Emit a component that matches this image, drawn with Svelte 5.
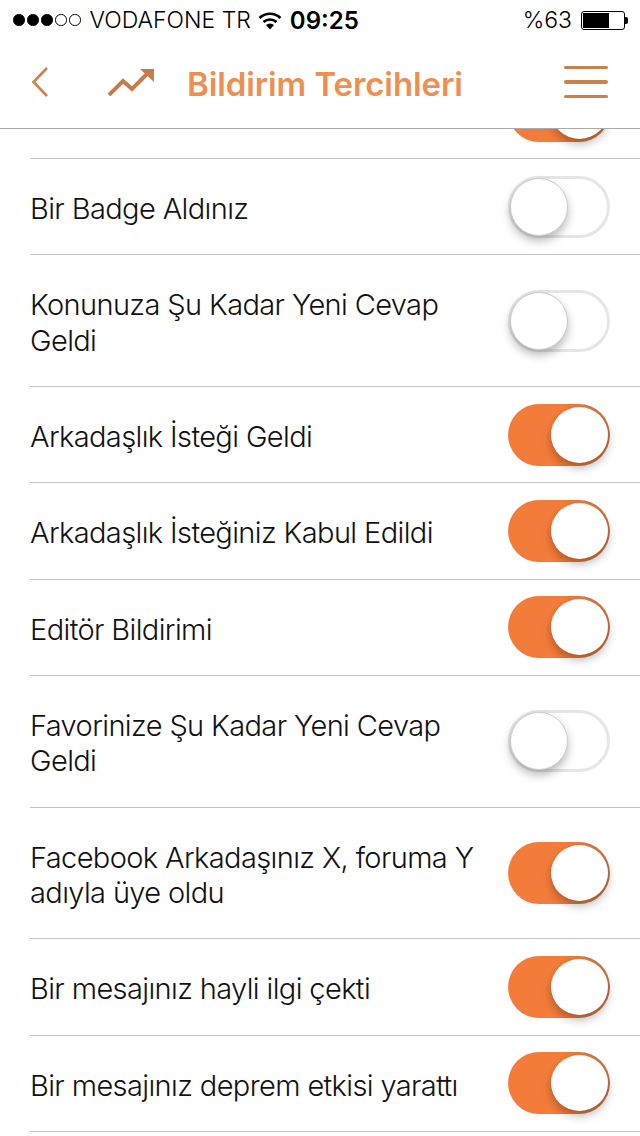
<script>
  const rows = [
    { label: ['Bir Badge Aldınız'], on: false },
    { label: ['Konunuza Şu Kadar Yeni Cevap', 'Geldi'], on: false },
    { label: ['Arkadaşlık İsteği Geldi'], on: true },
    { label: ['Arkadaşlık İsteğiniz Kabul Edildi'], on: true },
    { label: ['Editör Bildirimi'], on: true },
    { label: ['Favorinize Şu Kadar Yeni Cevap', 'Geldi'], on: false },
    { label: ['Facebook Arkadaşınız X, foruma Y', 'adıyla üye oldu'], on: true },
    { label: ['Bir mesajınız hayli ilgi çekti'], on: true },
    { label: ['Bir mesajınız deprem etkisi yarattı'], on: true },
  ]
</script>

<div class="phone">
  <div class="status">
    <div class="signal">
      {#each [1, 1, 1, 0, 0] as full}
        <span class="dot" class:full></span>
      {/each}
    </div>
    <span class="carrier">VODAFONE TR</span>
    <svg class="wifi" width="24" height="19" viewBox="0 0 24 19">
      <path d="M12 18.5 8 14a6 6 0 0 1 8 0z" fill="#000" />
      <path d="M5.5 11a9.5 9.5 0 0 1 13 0M1.5 7a15 15 0 0 1 21 0" fill="none" stroke="#000" stroke-width="2.6" />
    </svg>
    <span class="time">09:25</span>
    <span class="percent">%63</span>
    <div class="battery"><div class="level"></div></div>
    <div class="nub"></div>
  </div>

  <div class="nav">
    <svg class="back" width="16" height="30" viewBox="0 0 16 30">
      <path d="M15 1 1.5 15 15 29" fill="none" stroke="#c8814f" stroke-width="2.6" />
    </svg>
    <svg class="trend" width="46" height="28" viewBox="0 0 46 28">
      <path d="M1 27 15 13l9 8 15-15" fill="none" stroke="#c47e4c" stroke-width="4" />
      <path d="M32 1h14v13z" fill="#c47e4c" />
    </svg>
    <span class="title">Bildirim Tercihleri</span>
    <div class="menu">
      <span></span><span></span><span></span>
    </div>
  </div>

  <div class="list">
    <div class="row partial">
      <div class="toggle on"><div class="thumb"></div></div>
    </div>
    {#each rows as row}
      <div class="row">
        <div class="label">
          {#each row.label as line}
            <div>{line}</div>
          {/each}
        </div>
        <div class="toggle" class:on={row.on}><div class="thumb"></div></div>
      </div>
    {/each}
  </div>
</div>

<style>
  :global(body) { margin: 0; background: #fff; }
  .phone { width: 640px; height: 1136px; overflow: hidden; background: #fff; font-family: Inter, "Liberation Sans", sans-serif; color: #111; }

  .status { height: 40px; display: flex; align-items: center; font-size: 23px; color: #000; }
  .signal { display: flex; gap: 2.5px; margin-left: 13px; }
  .dot { width: 11.5px; height: 11.5px; box-sizing: border-box; border: 1px solid #000; border-radius: 50%; }
  .dot.full { background: #000; }
  .carrier { margin-left: 9px; font-weight: 300; }
  .wifi { margin-left: 7px; }
  .time { margin-left: 8px; font-size: 24px; font-weight: 600; }
  .percent { margin-left: auto; font-weight: 300; }
  .battery { width: 44px; height: 19px; margin-left: 9px; box-sizing: border-box; border: 1px solid #000; border-radius: 3px; padding: 1px; }
  .level { width: 26px; height: 100%; background: #000; }
  .nub { width: 3px; height: 7px; margin-right: 12px; background: #000; border-radius: 0 2px 2px 0; }

  .nav { height: 89px; box-sizing: border-box; border-bottom: 1px solid #aaa; display: flex; align-items: center; }
  .back { margin-left: 32px; margin-top: -4px; }
  .trend { margin-left: 60px; margin-top: -5px; }
  .title { margin-left: 33px; font-size: 33px; font-weight: 600; color: #ee8f52; letter-spacing: -0.1px; }
  .menu { margin-left: auto; margin-right: 32px; width: 44px; display: flex; flex-direction: column; gap: 11px; margin-top: -4px; }
  .menu span { height: 3.5px; border-radius: 2px; background: #c8814f; }

  .list { margin-left: 30px; }
  .row { display: flex; align-items: center; justify-content: space-between; padding: 30px 30px 30px 0; border-bottom: 1px solid #c4c4c4; }
  .row.partial { height: 30px; box-sizing: border-box; padding: 0 30px 0 0; justify-content: flex-end; align-items: flex-end; overflow: hidden; }
  .row.partial .toggle { margin: 0 0 16px; }
  .label { font-size: 29px; line-height: 35.33px; font-weight: 300; letter-spacing: -0.62px; margin: 2px 0 -2px; }

  .toggle { position: relative; flex: none; width: 102px; height: 62px; margin: -14px 0; box-sizing: border-box; border: 3px solid #e6e6e6; border-radius: 31px; background: #fff; }
  .toggle.on { border: none; background: linear-gradient(90deg, #f47c3a 55%, #c87240); }
  .thumb { position: absolute; left: -1px; top: -1px; width: 58px; height: 58px; box-sizing: border-box; border: 1px solid #ccc; border-radius: 50%; background: #fff; box-shadow: 0 5px 10px rgba(0, 0, 0, 0.28); }
  .on .thumb { left: 43px; top: 3px; width: 57px; height: 56px; border: none; }
</style>
